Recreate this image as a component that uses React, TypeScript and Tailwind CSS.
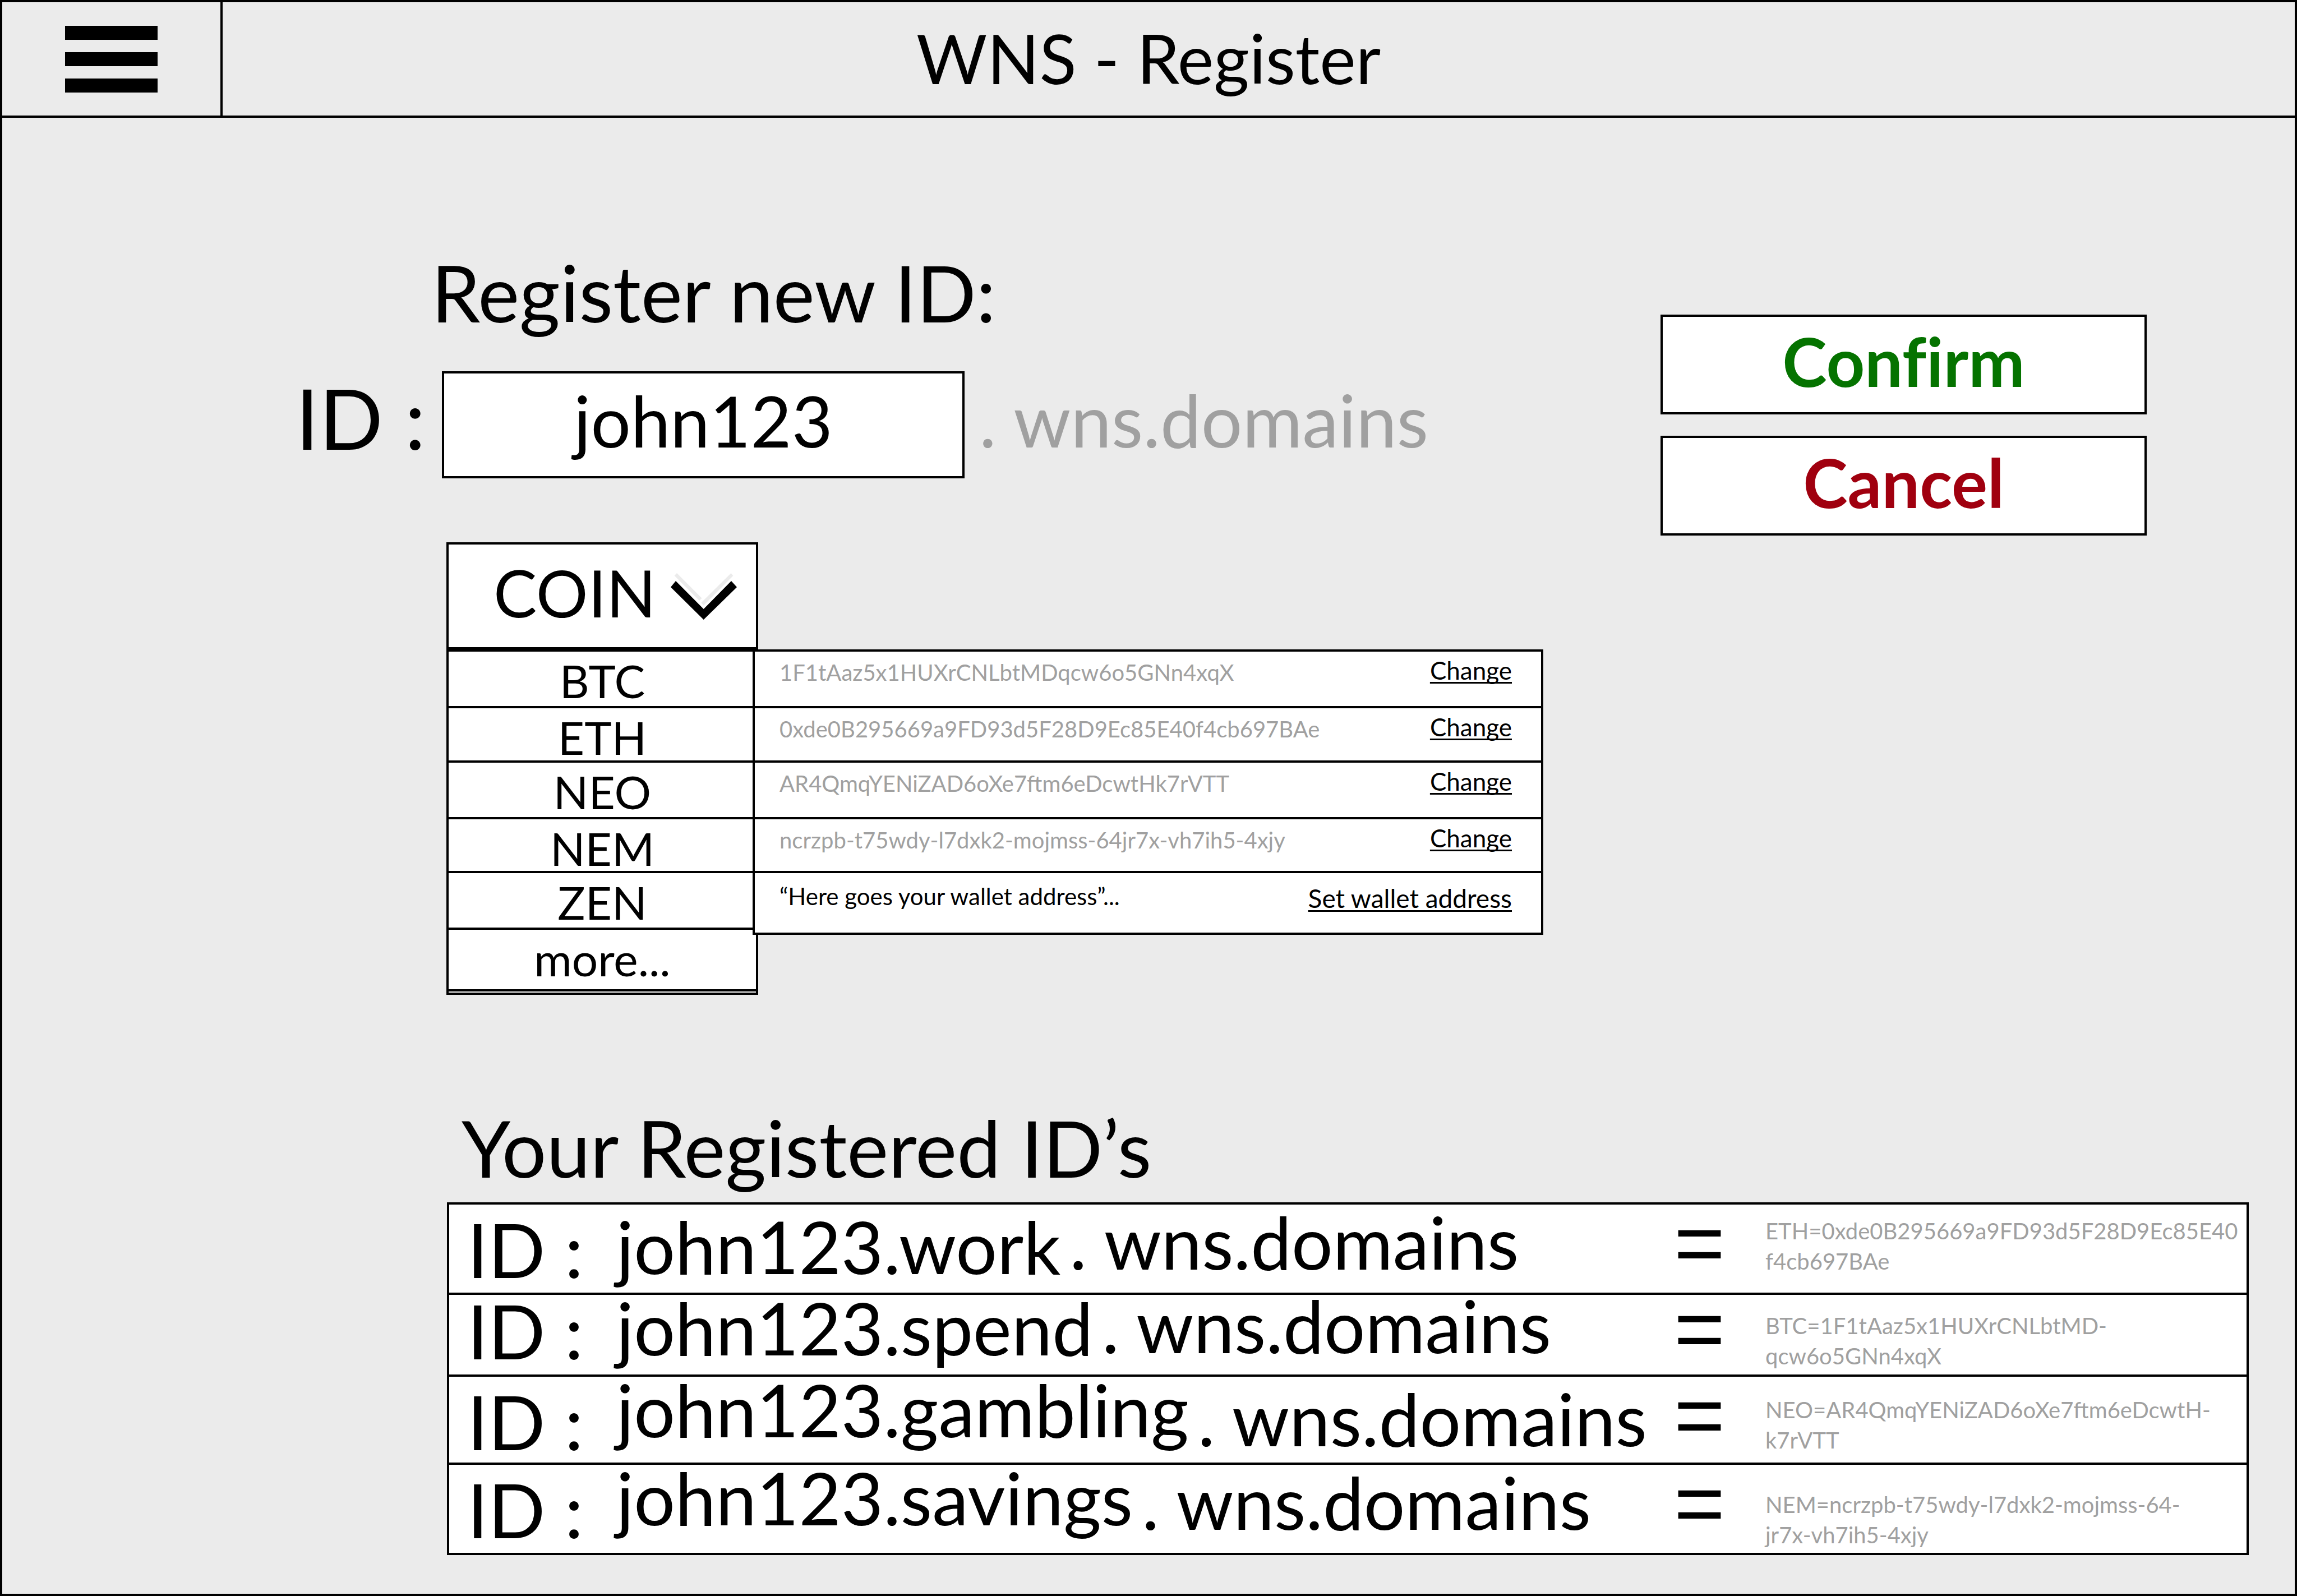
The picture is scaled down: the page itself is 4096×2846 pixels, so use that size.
const coins = [
  { name: "BTC", height: "h-[101px]" },
  { name: "ETH", height: "h-[97px]" },
  { name: "NEO", height: "h-[101px]" },
  { name: "NEM", height: "h-[96px]" },
  { name: "ZEN", height: "h-[101px]" },
  { name: "more...", height: "h-[110px]" },
];

const wallets = [
  { coin: "BTC", address: "1F1tAaz5x1HUXrCNLbtMDqcw6o5GNn4xqX", height: "h-[101px]" },
  { coin: "ETH", address: "0xde0B295669a9FD93d5F28D9Ec85E40f4cb697BAe", height: "h-[97px]" },
  { coin: "NEO", address: "AR4QmqYENiZAD6oXe7ftm6eDcwtHk7rVTT", height: "h-[101px]" },
  { coin: "NEM", address: "ncrzpb-t75wdy-l7dxk2-mojmss-64jr7x-vh7ih5-4xjy", height: "h-[96px]" },
];

const registered = [
  {
    name: "john123.work",
    lines: ["ETH=0xde0B295669a9FD93d5F28D9Ec85E40", "f4cb697BAe"],
    height: "h-[161px]",
    idPad: "pt-5",
    namePad: "pt-6",
    domainPad: "pt-4",
    equalsPad: "pt-2",
    addressPad: "pt-5",
  },
  {
    name: "john123.spend",
    lines: ["BTC=1F1tAaz5x1HUXrCNLbtMD-", "qcw6o5GNn4xqX"],
    height: "h-[146px]",
    idPad: "pt-1",
    namePad: "pt-2",
    domainPad: "pt-1",
    equalsPad: "pt-0",
    addressPad: "pt-7",
  },
  {
    name: "john123.gambling",
    lines: ["NEO=AR4QmqYENiZAD6oXe7ftm6eDcwtH-", "k7rVTT"],
    height: "h-[157px]",
    idPad: "pt-5",
    namePad: "pt-2",
    domainPad: "pt-6",
    equalsPad: "pt-2",
    addressPad: "pt-8",
  },
  {
    name: "john123.savings",
    lines: ["NEM=ncrzpb-t75wdy-l7dxk2-mojmss-64-", "jr7x-vh7ih5-4xjy"],
    height: "h-[161px]",
    idPad: "pt-5",
    namePad: "pt-2",
    domainPad: "pt-4",
    equalsPad: "pt-2",
    addressPad: "pt-11",
  },
];

const linkClass = "underline decoration-[3px] underline-offset-[4px] [text-decoration-skip-ink:none] whitespace-nowrap";

function ChevronDown() {
  return (
    <svg viewBox="0 0 118 84" className="w-[118px] h-[84px]" aria-hidden="true">
      <polygon points="6.6,5.5 11,1 55.5,45.7 51,50" fill="#ebebeb" />
      <polygon points="107.6,1 111.3,5.8 58.7,58.5 54.3,53.8" fill="#ebebeb" />
      <polygon points="0,26 9,15 58.7,65 108,15 118,26 58.7,84" fill="#000" />
    </svg>
  );
}

function Header() {
  return (
    <header className="grid grid-cols-[393px_1fr_393px] h-[206px] border-b-4 border-black">
      <button type="button" aria-label="Menu" className="flex flex-col items-center justify-center gap-[22px] border-r-4 border-black">
        <span className="w-[165px] h-[25px] bg-black" />
        <span className="w-[165px] h-[25px] bg-black" />
        <span className="w-[165px] h-[25px] bg-black" />
      </button>
      <h1 className="flex items-center justify-center pb-1 text-[122px] leading-none">WNS - Register</h1>
    </header>
  );
}

function CoinPicker() {
  return (
    <div className="mt-[114px] pl-[792px]">
      <button
        type="button"
        aria-expanded="true"
        className="flex items-center justify-between w-[556px] h-[191px] pl-[80px] pr-[34px] border-4 border-black bg-white text-[116px] leading-none"
      >
        <span className="pb-3">COIN</span>
        <ChevronDown />
      </button>
      <div className="flex items-start">
        <ul className="w-[556px] pb-[2px] border-4 border-black bg-white">
          {coins.map((coin) => (
            <li key={coin.name} className={`${coin.height} border-b-4 border-black`}>
              <button type="button" className="w-full pt-[10px] text-center text-[82px] leading-none">
                {coin.name}
              </button>
            </li>
          ))}
        </ul>
        <table className="-ml-[10px] w-[1410px] table-fixed border-4 border-black bg-white relative">
          <colgroup>
            <col />
            <col className="w-[360px]" />
          </colgroup>
          <tbody>
            {wallets.map((wallet) => (
              <tr key={wallet.coin} className={`${wallet.height} border-4 border-black align-top whitespace-nowrap`}>
                <td className="pl-[44px] pt-3 text-[40px] leading-[50px] text-[#a0a0a0]">{wallet.address}</td>
                <td className="pr-[52px] pt-2 text-right text-[44px] leading-[50px]">
                  <a href="#change" aria-label={`Change ${wallet.coin} address`} className={linkClass}>
                    Change
                  </a>
                </td>
              </tr>
            ))}
            <tr className="h-[110px] border-4 border-black align-top">
              <td colSpan={2} className="pl-[44px] pr-[52px] pt-4 leading-[50px]">
                <div className="flex items-start justify-between">
                  <span className="text-[42px]">“Here goes your wallet address”...</span>
                  <a href="#set" className={`${linkClass} pt-1 text-[46px]`}>
                    Set wallet address
                  </a>
                </div>
              </td>
            </tr>
          </tbody>
        </table>
      </div>
    </div>
  );
}

function RegisterForm() {
  return (
    <form className="flex justify-between">
      <div className="pt-[236px]">
        <h2 className="pl-[765px] text-[140px] leading-[150px]">Register new ID:</h2>
        <div className="mt-[66px] flex items-center pl-[523px]">
          <label htmlFor="new-id" className="w-[261px] pb-7 text-[150px] leading-none whitespace-nowrap">
            ID :
          </label>
          <input
            id="new-id"
            defaultValue="john123"
            className="w-[932px] h-[191px] pb-4 border-4 border-black bg-white text-center text-[126px]"
          />
          <span className="pl-[26px] pb-5 text-[130px] leading-none text-[#a0a0a0] whitespace-nowrap">. wns.domains</span>
        </div>
        <CoinPicker />
      </div>
      <div className="mt-[351px] mr-[264px] ml-auto flex w-[867px] flex-col gap-[38px] text-[120px] leading-none font-bold [font-variant-ligatures:none]">
        <button type="submit" className="h-[178px] pb-3 border-4 border-black bg-white text-[#057300]">
          Confirm
        </button>
        <button type="button" className="h-[178px] pb-3 border-4 border-black bg-white text-[#a0000f]">
          Cancel
        </button>
      </div>
    </form>
  );
}

function RegisteredIds() {
  return (
    <section className="mt-[197px] pl-[793px] pr-[82px]">
      <h2 className="pl-[26px] text-[140px] leading-[150px]">Your Registered ID’s</h2>
      <table className="mt-[23px] w-full table-fixed border-4 border-black bg-white">
        <colgroup>
          <col className="w-[300px]" />
          <col />
          <col className="w-[163px]" />
          <col className="w-[860px]" />
        </colgroup>
        <tbody>
          {registered.map((row) => (
            <tr key={row.name} className={`${row.height} border-4 border-black align-top whitespace-nowrap`}>
              <td className={`${row.idPad} pl-[32px] text-[134px] leading-[120px]`}>ID :</td>
              <td className="text-[130px] leading-[100px]">
                <div className="flex items-start gap-[16px]">
                  <span className={row.namePad}>{row.name}</span>
                  <span className={row.domainPad}>. wns.domains</span>
                </div>
              </td>
              <td className={`${row.equalsPad} font-['Liberation_Sans',sans-serif] text-[156px] leading-[120px]`}>=</td>
              <td className={`${row.addressPad} text-[40px] leading-[54px] text-[#a0a0a0]`}>
                {row.lines[0]}
                <br />
                {row.lines[1]}
              </td>
            </tr>
          ))}
        </tbody>
      </table>
    </section>
  );
}

export default function App() {
  return (
    <div className="min-h-screen border-4 border-black bg-[#ebebeb] font-['Lato',sans-serif] text-black">
      <Header />
      <main>
        <RegisterForm />
        <RegisteredIds />
      </main>
    </div>
  );
}
